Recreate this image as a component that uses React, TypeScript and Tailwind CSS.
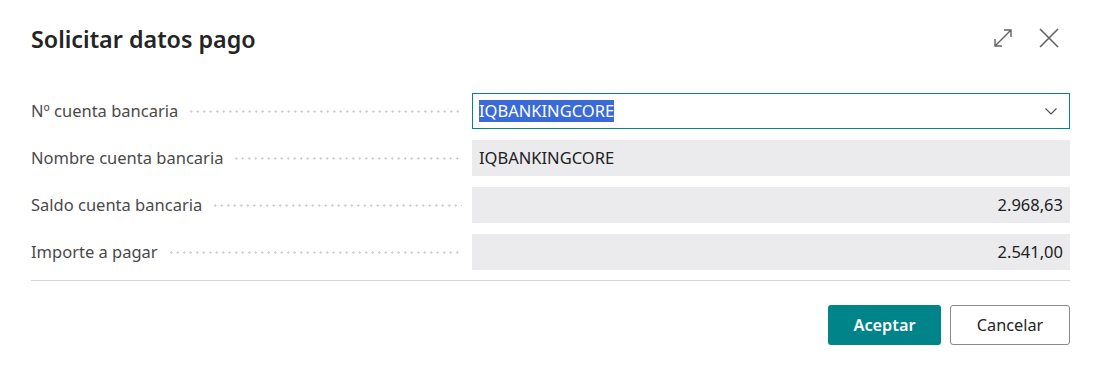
import React from "react";

const rows = [
  { label: "Nº cuenta bancaria", value: "IQBANKINGCORE", kind: "select" },
  { label: "Nombre cuenta bancaria", value: "IQBANKINGCORE", kind: "text" },
  { label: "Saldo cuenta bancaria", value: "2.968,63", kind: "number" },
  { label: "Importe a pagar", value: "2.541,00", kind: "number" },
];

const Field: React.FC<{ value: string; kind: string }> = ({ value, kind }) => {
  if (kind === "select") {
    return (
      <div className="flex h-[36px] w-[598px] items-center justify-between border border-[#00858a] bg-white pl-[6px] pr-[10px]">
        <span className="bg-[#3a6ad8] leading-[22px] text-white">{value}</span>
        <svg width="16" height="16" viewBox="0 0 16 16" fill="none">
          <path d="M2.5 5.5 8 11l5.5-5.5" stroke="#505050" strokeWidth="1.1" />
        </svg>
      </div>
    );
  }
  return (
    <div
      className={`flex h-[36px] w-[598px] items-center bg-[#ebebed] px-[7px] text-[#212121] ${
        kind === "number" ? "justify-end" : "justify-start"
      }`}
    >
      {value}
    </div>
  );
};

export default function App() {
  return (
    <div
      className="h-[374px] w-[1100px] bg-white text-[#212121]"
      style={{ fontFamily: '"Segoe UI", "Noto Sans", sans-serif' }}
    >
      <div className="flex items-start justify-between pl-[31px] pr-[40px] pt-[21px]">
        <h1 className="text-[23.3px] font-semibold leading-[36px] text-[#242424]">
          Solicitar datos pago
        </h1>
        <div className="flex items-center gap-[24px] pt-[6px]">
          <svg width="22" height="22" viewBox="0 0 22 22" fill="none" stroke="#616161" strokeWidth="1.4">
            <path d="M3 19 19 3M12 3h7v7M3 12v7h7" />
          </svg>
          <svg width="22" height="22" viewBox="0 0 22 22" fill="none" stroke="#616161" strokeWidth="1.6">
            <path d="M2 2l18 18M20 2 2 20" />
          </svg>
        </div>
      </div>

      <div className="mt-[36px] flex flex-col gap-[11px] pl-[31px] pr-[30px]">
        {rows.map((r) => (
          <div key={r.label} className="flex h-[36px] items-center text-[16.5px]">
            <span className="whitespace-nowrap text-[#4a4a4a]">{r.label}</span>
            <span className="mx-[10px] h-[3px] flex-1 bg-[radial-gradient(circle,#cfcfcf_1px,transparent_1.2px)] bg-[length:6.5px_3px] bg-repeat-x" />
            <Field value={r.value} kind={r.kind} />
          </div>
        ))}
      </div>

      <div className="ml-[31px] mr-[30px] mt-[10px] h-px bg-[#d6d6d6]" />

      <div className="mt-[24px] flex justify-end gap-[9px] px-[30px] text-[16.3px]">
        <button className="h-[40px] w-[113px] rounded-[3px] bg-[#00848a] font-semibold text-white">
          Aceptar
        </button>
        <button className="h-[40px] w-[120px] rounded-[3px] border border-[#8a8a8a] bg-white text-[#242424]">
          Cancelar
        </button>
      </div>
    </div>
  );
}
